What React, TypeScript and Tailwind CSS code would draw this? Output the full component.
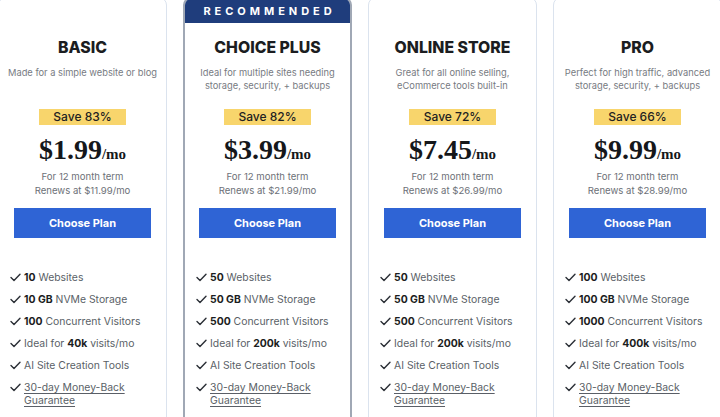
import type { ReactNode } from "react";

type Plan = {
  name: string;
  desc: ReactNode;
  save: string;
  price: string;
  renews: string;
  recommended?: boolean;
  features: [string, string, string, string];
};

const plans: Plan[] = [
  {
    name: "BASIC",
    desc: "Made for a simple website or blog",
    save: "Save 83%",
    price: "$1.99",
    renews: "Renews at $11.99/mo",
    features: ["10", "10 GB", "100", "40k"],
  },
  {
    name: "CHOICE PLUS",
    desc: (
      <>
        Ideal for multiple sites needing
        <br />
        storage, security, + backups
      </>
    ),
    save: "Save 82%",
    price: "$3.99",
    renews: "Renews at $21.99/mo",
    recommended: true,
    features: ["50", "50 GB", "500", "200k"],
  },
  {
    name: "ONLINE STORE",
    desc: (
      <>
        Great for all online selling,
        <br />
        eCommerce tools built-in
      </>
    ),
    save: "Save 72%",
    price: "$7.45",
    renews: "Renews at $26.99/mo",
    features: ["50", "50 GB", "500", "200k"],
  },
  {
    name: "PRO",
    desc: (
      <>
        Perfect for high traffic, advanced
        <br />
        storage, security, + backups
      </>
    ),
    save: "Save 66%",
    price: "$9.99",
    renews: "Renews at $28.99/mo",
    features: ["100", "100 GB", "1000", "400k"],
  },
];

function Check() {
  return (
    <svg width="11" height="9" viewBox="0 0 11 9" className="mt-[2px] shrink-0">
      <path d="M1 4.6 L4 7.6 L10 1.2" fill="none" stroke="#2b2f36" strokeWidth="1.4" strokeLinecap="round" strokeLinejoin="round" />
    </svg>
  );
}

function Feature({ children }: { children: ReactNode }) {
  return (
    <li className="flex items-start gap-[3px] text-[10.4px] leading-[13px] text-[#5a5f67]">
      <Check />
      <span>{children}</span>
    </li>
  );
}

function Card({ plan }: { plan: Plan }) {
  const [sites, storage, visitors, visits] = plan.features;
  return (
    <div
      className={`flex h-[440px] w-[169px] shrink-0 flex-col overflow-hidden rounded-lg bg-white ${
        plan.recommended ? "border-2 border-[#a0a8b5]" : "border border-[#dbe3ee]"
      }`}
    >
      {plan.recommended ? (
        <div className="flex h-[24px] items-center justify-center bg-[#1f3d7c] pl-[4px] text-[11px] font-bold tracking-[0.36em] text-white">
          RECOMMENDED
        </div>
      ) : (
        <div className="h-[25px]" />
      )}
      <div className="flex flex-col items-center text-center">
        <h2 className="mt-[15px] text-[15.8px] font-extrabold leading-[20px] text-[#1b1d21]">{plan.name}</h2>
        <p className="mt-[8px] h-[26px] text-[9.3px] leading-[13px] text-[#777b82]">{plan.desc}</p>
        <div className="mt-[17px] flex h-[16px] w-[87px] items-center justify-center bg-[#f8d56c] text-[12px] font-medium text-[#222]">
          {plan.save}
        </div>
        <div className="mt-[9px] leading-[32px] text-[#15171a]" style={{ fontFamily: '"Liberation Serif", serif' }}>
          <span className="text-[28px] font-bold">{plan.price}</span>
          <span className="text-[15px] font-bold">/mo</span>
        </div>
        <p className="text-[9.6px] leading-[14px] text-[#6d7178]">For 12 month term</p>
        <p className="text-[9.6px] leading-[14px] text-[#6d7178]">{plan.renews}</p>
        <button className="mt-[10px] h-[30px] w-[137px] bg-[#2f64d5] text-[11px] font-bold text-white">
          Choose Plan
        </button>
      </div>
      <ul className="mt-[33px] flex flex-col gap-[9px] pl-[11px]">
        <Feature>
          <b className="font-bold text-[#1b1d21]">{sites}</b> Websites
        </Feature>
        <Feature>
          <b className="font-bold text-[#1b1d21]">{storage}</b> NVMe Storage
        </Feature>
        <Feature>
          <b className="font-bold text-[#1b1d21]">{visitors}</b> Concurrent Visitors
        </Feature>
        <Feature>
          Ideal for <b className="font-bold text-[#1b1d21]">{visits}</b> visits/mo
        </Feature>
        <Feature>AI Site Creation Tools</Feature>
        <Feature>
          <span className="underline underline-offset-2">
            30-day Money-Back
            <br />
            Guarantee
          </span>
        </Feature>
      </ul>
    </div>
  );
}

export default function App() {
  return (
    <div
      className="h-[417px] w-[720px] overflow-hidden bg-white"
      style={{ fontFamily: 'Inter, "Open Sans", sans-serif' }}
    >
      <div className="-ml-[2px] -mt-[3px] flex gap-[16px]">
        {plans.map((p) => (
          <Card key={p.name} plan={p} />
        ))}
      </div>
    </div>
  );
}
